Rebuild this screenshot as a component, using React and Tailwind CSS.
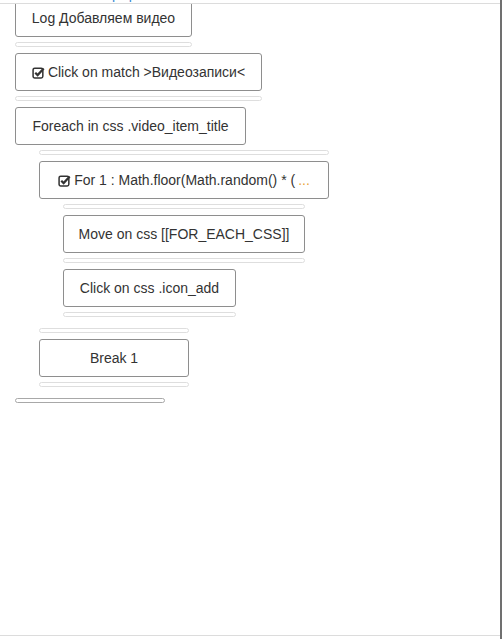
import React from 'react';

function CheckIcon() {
  return (
    <svg width="13" height="13" viewBox="0 0 12 12" className="mr-[3px] shrink-0" fill="none" stroke="#333">
      <rect x="1" y="2" width="9" height="9" rx="1.5" strokeWidth="1.4" />
      <path d="M3 6.2 L5.2 8.4 L10.8 2.4" strokeWidth="2" />
    </svg>
  );
}

function Btn({ w, children }) {
  return (
    <div
      className={`${w} h-[38px] mt-[6px] flex items-center justify-center border border-[#8e8e8e] rounded-[3px] bg-white text-[14px] leading-5 text-[#333] whitespace-nowrap`}
    >
      {children}
    </div>
  );
}

function Bar({ w, dark }) {
  return (
    <div
      className={`${w} h-[5px] mt-[5px] rounded-full border ${dark ? 'border-[#a8a8a8]' : 'border-[#dedede]'}`}
    />
  );
}

export default function App() {
  return (
    <div className="w-[503px] h-[639px] bg-white flex font-['Liberation_Sans',Arial,sans-serif]">
      <div className="w-[500px] flex flex-col">
        {/* descenders of the header link above the scroll area */}
        <div className="h-[3px] overflow-hidden">
          <div className="-mt-[14px] text-[14px] leading-4 text-[#3a87d0] flex">
            <span className="ml-[112px]">р</span>
            <span className="ml-[9px]">р</span>
          </div>
        </div>

        <div className="h-[633px] border-t border-b border-[#dcdcdc] overflow-hidden pl-[15px]">
          <div className="-mt-[11px]">
            <Btn w="w-[177px]">Log Добавляем видео</Btn>
            <Bar w="w-[177px]" />

            <Btn w="w-[247px]">
              <CheckIcon />
              Click on match &gt;Видеозаписи&lt;
            </Btn>
            <Bar w="w-[247px]" />

            <Btn w="w-[231px]">Foreach in css .video_item_title</Btn>

            <div className="ml-6 pb-[6px]">
              <Bar w="w-[290px]" />
              <Btn w="w-[290px]">
                <CheckIcon />
                For 1 : Math.floor(Math.random() * ( <span className="text-[#eaa53a] ml-[3px]">...</span>
              </Btn>

              <div className="ml-6 pb-[6px]">
                <Bar w="w-[242px]" />
                <Btn w="w-[242px]">Move on css [[FOR_EACH_CSS]]</Btn>
                <Bar w="w-[242px]" />
                <Btn w="w-[173px]">Click on css .icon_add</Btn>
                <Bar w="w-[173px]" />
              </div>

              <Bar w="w-[150px]" />
              <Btn w="w-[150px]">Break 1</Btn>
              <Bar w="w-[150px]" />
            </div>

            <Bar w="w-[150px]" dark />
          </div>
        </div>
      </div>
      <div className="w-[2px] h-full bg-[#707070]" />
    </div>
  );
}
